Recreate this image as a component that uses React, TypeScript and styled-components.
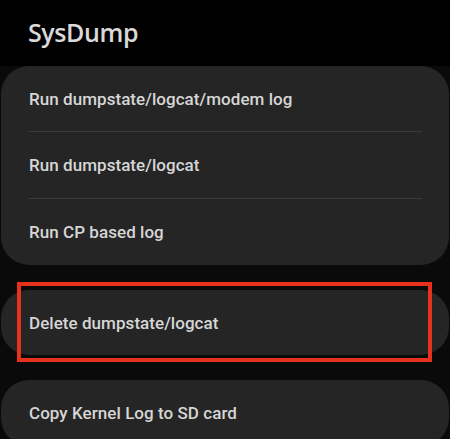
import React from "react";
import styled, { createGlobalStyle } from "styled-components";

const Global = createGlobalStyle`
  html, body { margin: 0; padding: 0; background: #000; }
  body { font-family: Roboto, "Open Sans", "Noto Sans", sans-serif; }
`;

const Screen = styled.div`
  width: 450px;
  height: 439px;
  overflow: hidden;
  background: #0a0a0a;
  display: flex;
  flex-direction: column;
`;

const Header = styled.header`
  height: 66px;
  flex: none;
  background: #000;
  display: flex;
  align-items: center;
  padding: 0 28px;
  box-sizing: border-box;
`;

const Title = styled.h1`
  margin: 0 0 2px;
  font-family: "Open Sans", Roboto, sans-serif;
  font-size: 25px;
  font-weight: 600;
  color: #d9d9d9;
  letter-spacing: -0.4px;
`;

const List = styled.div`
  display: flex;
  flex-direction: column;
  gap: 25px;
`;

const Card = styled.div`
  position: relative;
  background: #252525;
  border-radius: 28px;
  margin: 0 1px;
  display: flex;
  flex-direction: column;
`;

const Row = styled.div<{ $h?: number }>`
  height: ${(p) => p.$h ?? 66}px;
  display: flex;
  align-items: center;
  padding: 0 28px;
  font-size: 17px;
  font-weight: 500;
  color: #d6d6d6;
  letter-spacing: 0.05px;
`;

const Divider = styled.div`
  height: 1px;
  margin: 0 27px;
  background: #3a3a3a;
`;

const Highlight = styled.div`
  position: absolute;
  top: -8px;
  bottom: -7px;
  left: 16px;
  right: 17px;
  border: 4px solid #e8311d;
  pointer-events: none;
`;

export default function App() {
  return (
    <>
      <Global />
      <Screen>
        <Header>
          <Title>SysDump</Title>
        </Header>
        <List>
          <Card>
            <Row $h={65}>Run dumpstate/logcat/modem log</Row>
            <Divider />
            <Row>Run dumpstate/logcat</Row>
            <Divider />
            <Row>Run CP based log</Row>
          </Card>
          <Card>
            <Row $h={65}>Delete dumpstate/logcat</Row>
            <Highlight />
          </Card>
          <Card>
            <Row>Copy Kernel Log to SD card</Row>
          </Card>
        </List>
      </Screen>
    </>
  );
}
